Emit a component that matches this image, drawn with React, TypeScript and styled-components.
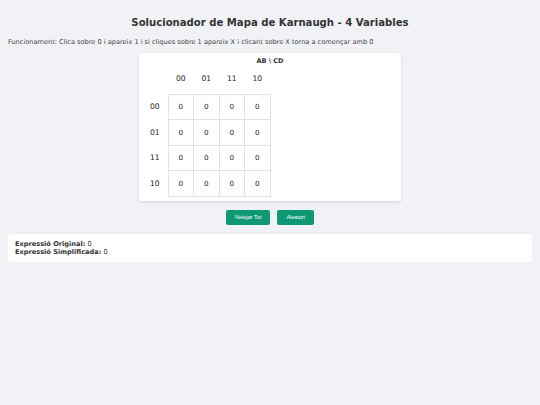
import React, { useState } from "react";
import styled, { createGlobalStyle } from "styled-components";

const GlobalStyle = createGlobalStyle`
    body {
        margin: 8px;
        background-color: #f0f2f5;
        font-family: "DejaVu Sans", Verdana, sans-serif;
        color: #333;
    }
`;

const Title = styled.h1`
    font-size: 10.1px;
    font-weight: bold;
    text-align: center;
    margin: 9px 0 10px;
    color: #333;
`;

const Info = styled.p`
    font-size: 6.6px;
    margin: 0 0 7px;
    color: #444;
`;

const Card = styled.div`
    width: 252px;
    margin: 0 auto;
    padding: 3px 5px 4px;
    background: #fff;
    border-radius: 3px;
    box-shadow: 0 1px 3px rgba(0, 0, 0, 0.12);
`;

const AxisLabel = styled.div`
    font-size: 6.5px;
    font-weight: bold;
    text-align: center;
    line-height: 10px;
`;

const Table = styled.table`
    border-collapse: collapse;
    margin-left: -2px;
`;

const HeadCell = styled.th`
    width: 25.5px;
    height: 19.5px;
    padding: 8px 0 0;
    vertical-align: top;
    font-size: 7.6px;
    font-weight: normal;
    color: #222;
`;

const RowLabel = styled.th`
    width: 25.5px;
    height: 25.5px;
    padding: 0;
    font-size: 7.6px;
    font-weight: normal;
    color: #222;
`;

const Cell = styled.td`
    width: 25.5px;
    height: 25.5px;
    padding: 0;
    text-align: center;
    font-size: 7.2px;
    color: #222;
    border: 1px solid #e2e2e2;
    cursor: pointer;
    user-select: none;
    box-sizing: border-box;
`;

const Buttons = styled.div`
    display: flex;
    justify-content: center;
    gap: 7px;
    margin-top: 9px;
`;

const Button = styled.button`
    height: 15px;
    padding: 0 9px;
    border: none;
    border-radius: 2px;
    background: #0e9874;
    color: #fff;
    font-family: "Liberation Sans", Arial, sans-serif;
    font-size: 5.5px;
    cursor: pointer;
`;

const Result = styled.div`
    margin-top: 9px;
    padding: 6px 7px;
    background: #fff;
    border-radius: 2px;
    box-shadow: 0 1px 3px rgba(0, 0, 0, 0.12);
    font-size: 6.6px;
    line-height: 8px;
    color: #333;
`;

const codes = ["00", "01", "11", "10"];
const cycle = ["0", "1", "X"];

function App() {
    const [cells, setCells] = useState<string[]>(Array(16).fill("0"));

    const toggle = (i: number) => {
        setCells((prev) => prev.map((v, j) => (j === i ? cycle[(cycle.indexOf(v) + 1) % 3] : v)));
    };

    const random = () => setCells(cells.map(() => cycle[Math.floor(Math.random() * 2)]));

    return (
        <>
            <GlobalStyle />
            <Title>Solucionador de Mapa de Karnaugh - 4 Variables</Title>
            <Info>Funcionament: Clica sobre 0 i apareix 1 i si cliques sobre 1 apareix X i clicant sobre X torna a començar amb 0</Info>
            <Card>
                <AxisLabel>AB \ CD</AxisLabel>
                <Table>
                    <thead>
                        <tr>
                            <HeadCell />
                            {codes.map((c) => (
                                <HeadCell key={c}>{c}</HeadCell>
                            ))}
                        </tr>
                    </thead>
                    <tbody>
                        {codes.map((row, r) => (
                            <tr key={row}>
                                <RowLabel>{row}</RowLabel>
                                {codes.map((col, c) => (
                                    <Cell key={col} onClick={() => toggle(r * 4 + c)}>
                                        {cells[r * 4 + c]}
                                    </Cell>
                                ))}
                            </tr>
                        ))}
                    </tbody>
                </Table>
            </Card>
            <Buttons>
                <Button onClick={() => setCells(Array(16).fill("0"))}>Netejar Tot</Button>
                <Button onClick={random}>Aleatori</Button>
            </Buttons>
            <Result>
                <div>
                    <b>Expressió Original:</b> 0
                </div>
                <div>
                    <b>Expressió Simplificada:</b> 0
                </div>
            </Result>
        </>
    );
}

export default App;
